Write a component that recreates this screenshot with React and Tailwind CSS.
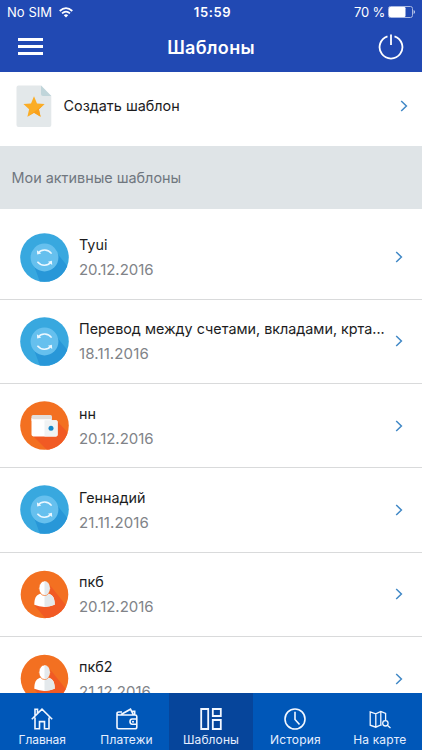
import React from "react";

function Chevron() {
  return (
    <svg className="h-3 w-2 shrink-0" viewBox="0 0 8 12" fill="none" stroke="#4088c6" strokeWidth="1.5">
      <path d="M1.2 1 6.4 6 1.2 11" />
    </svg>
  );
}

function TransferIcon() {
  return (
    <svg className="size-[49px] shrink-0" viewBox="0 0 49 49">
      <defs>
        <clipPath id="transfer">
          <circle cx="24.5" cy="24.5" r="24.3" />
        </clipPath>
      </defs>
      <g clipPath="url(#transfer)">
        <rect width="49" height="49" fill="#38a8df" />
        <path d="M13 30 20 49H49V35L36 19Z" fill="#2897d8" />
      </g>
      <circle cx="24.5" cy="24.5" r="13.9" fill="#66c0ee" />
      <g fill="none" stroke="#edf8ff" strokeWidth="1.5">
        <path d="M18.3 20C21.5 15.9 28 16 31.6 20.6M30.8 29.3C27.5 33.3 21 33.2 17.4 28.8" />
      </g>
      <path d="M16.9 17.3 17.2 21.6 21.2 20.6ZM32.2 32 31.9 27.7 27.9 28.7Z" fill="#edf8ff" />
    </svg>
  );
}

function WalletIcon() {
  return (
    <svg className="size-[49px] shrink-0" viewBox="0 0 49 49">
      <defs>
        <clipPath id="wallet">
          <circle cx="24.5" cy="24.5" r="24.3" />
        </clipPath>
      </defs>
      <g clipPath="url(#wallet)">
        <rect width="49" height="49" fill="#f37021" />
        <path d="M12 34 27 49H49V33L37 20Z" fill="#f15a24" />
      </g>
      <path d="M11.5 17V15.5a1.5 1.5 0 0 1 1.5-1.5H30.5a1.5 1.5 0 0 1 1.5 1.5V20H11.5Z" fill="#e2dedb" />
      <path d="M11.5 16.5q.4 1.7 2.2 1.7H31v1H36a1.6 1.6 0 0 1 1.6 1.6V33.8a1.6 1.6 0 0 1-1.6 1.6H13.3a1.8 1.8 0 0 1-1.8-1.8Z" fill="#fff" />
      <path d="M24.5 19.2H36a1.6 1.6 0 0 1 1.6 1.6V33.8a1.6 1.6 0 0 1-1.6 1.6H24.5Z" fill="#f0f2f3" />
      <circle cx="31" cy="27.3" r="2.5" fill="#1688c8" />
    </svg>
  );
}

function PersonIcon() {
  return (
    <svg className="size-[49px] shrink-0" viewBox="0 0 49 49">
      <defs>
        <clipPath id="person">
          <circle cx="24.5" cy="24.5" r="23.8" />
        </clipPath>
      </defs>
      <g clipPath="url(#person)">
        <rect width="49" height="49" fill="#f37021" />
        <path d="M15 36 26 49H49V39L29 14Z" fill="#f15a24" />
      </g>
      <path d="M14.3 34.8C14.3 28.5 15.8 25.6 20 23.8H29C33.2 25.6 34.7 28.5 34.7 34.8Q30 36.9 24.5 36.9T14.3 34.8Z" fill="#fff" />
      <path d="M24.5 23.8H29C33.2 25.6 34.7 28.5 34.7 34.8Q30 36.9 24.5 36.9Z" fill="#e4e9ec" />
      <ellipse cx="24.5" cy="18.2" rx="5.6" ry="7.3" fill="#fff" stroke="#f37021" strokeWidth=".8" />
      <path d="M24.5 11.3a5.2 6.9 0 0 1 0 13.8Z" fill="#e4e9ec" />
    </svg>
  );
}

const icons = { transfer: TransferIcon, wallet: WalletIcon, person: PersonIcon };

const templates = [
  { icon: "transfer", name: "Tyui", date: "20.12.2016", dateTracking: "tracking-[-0.03px]" },
  { icon: "transfer", name: "Перевод между счетами, вкладами, крта...", date: "18.11.2016", dateTracking: "tracking-[0.12px]" },
  { icon: "wallet", name: "нн", date: "20.12.2016", dateTracking: "tracking-[-0.03px]" },
  { icon: "transfer", name: "Геннадий", date: "21.11.2016", dateTracking: "tracking-[0.12px]" },
  { icon: "person", name: "пкб", date: "20.12.2016", dateTracking: "tracking-[-0.03px]" },
  { icon: "person", name: "пкб2", date: "21.12.2016", dateTracking: "tracking-[0px]" },
];

function TemplateRow({ item }) {
  const Icon = icons[item.icon];
  return (
    <li className="flex h-[84.3px] shrink-0 items-center border-b border-[#d9dadb] pr-[19px] pl-5">
      <Icon />
      <div className="ml-[10px] min-w-0 flex-1 whitespace-nowrap">
        <div className="text-[14.35px] leading-[25px] text-[#1c1c1e]">{item.name}</div>
        <div className={`text-[15px] leading-[25px] text-[#808388] ${item.dateTracking}`}>{item.date}</div>
      </div>
      <Chevron />
    </li>
  );
}

function Glyph({ children }) {
  return (
    <svg className="h-[22px] w-[22px]" viewBox="0 0 22 22" fill="none" stroke="#f2f7ff" strokeWidth="1.6">
      {children}
    </svg>
  );
}

const tabs = [
  {
    label: "Главная",
    tracking: "tracking-[-0.1px]",
    glyph: <path d="M.8 11.2 11 1.2 21.2 11.2M4 8V1.2H6.5V5.3M4 9.5V20.8H8.5V13.6H13.5V20.8H18V9.5" />,
  },
  {
    label: "Платежи",
    tracking: "tracking-[0.15px]",
    glyph: (
      <>
        <path d="M1 5.2V19.2Q1 20.8 2.6 20.8H19Q20.8 20.8 20.8 19.2V8.4Q20.8 7 19.2 7H2.8Q1 7 1 5.4 1 4 3 4H6M5 6.5 14.5 1.2 17.4 6.8M15.5 3.4H18.7V7M20.8 11H16.2Q14 11 14 13.6T16.2 16.3H20.8" />
        <circle cx="17" cy="13.7" r="1" fill="#f2f7ff" stroke="none" />
      </>
    ),
  },
  {
    label: "Шаблоны",
    tracking: "tracking-[0.1px]",
    active: true,
    glyph: <path strokeWidth="1.8" d="M1.2 1H8.2V21H1.2ZM12.8 1H20.8V8H12.8ZM12.8 12H20.8V21H12.8Z" />,
  },
  {
    label: "История",
    tracking: "tracking-[0.15px]",
    glyph: (
      <>
        <circle cx="11" cy="11" r="10" />
        <path d="M11 3.8V11.5L15.5 16.5" />
      </>
    ),
  },
  {
    label: "На карте",
    tracking: "tracking-[0.15px]",
    glyph: (
      <g strokeWidth="1.3">
        <path d="M12.5 17.4 11.8 17 6.8 19.2 1.2 17.2V4L6.8 5.8 11.8 3.5 16.6 5.5V12M6.8 5.8V19.2M11.8 3.5V17" />
        <circle cx="16.4" cy="15.3" r="2.7" />
        <path d="M18.3 17.2 21.5 20" />
      </g>
    ),
  },
];

export default function App() {
  return (
    <div className="flex h-[750px] w-[422px] flex-col overflow-hidden bg-white font-['Inter','Noto_Sans',sans-serif]">
      <header className="h-[72px] shrink-0 bg-[#2149b3] text-white">
        <div className="grid h-6 grid-cols-3 items-center pr-[7px] pl-[7px] text-[13px] leading-6">
          <div className="flex items-center gap-[7px]">
            <span className="tracking-[0.05px]">No SIM</span>
            <svg className="h-[11px] w-[14px]" viewBox="0 0 14 11" fill="none" stroke="white" strokeWidth="1.7">
              <path d="M.7 4Q7-1.8 13.3 4M3 6.4Q7 2.8 11 6.4" />
              <path d="M4.8 8.2Q7 6.2 9.2 8.2L7 10.6Z" fill="white" stroke="none" />
            </svg>
          </div>
          <span className="pl-[3px] text-center font-semibold tracking-[0.6px]">15:59</span>
          <div className="flex items-center justify-end gap-[3px]">
            <span className="text-[13px] tracking-[-0.2px] whitespace-nowrap">70 %</span>
            <svg className="h-[12px] w-[27px]" viewBox="0 0 27 12">
              <rect x=".5" y=".5" width="24" height="11" rx="2" fill="none" stroke="#a8b8e2" />
              <rect x="1" y="1" width="16.5" height="10" rx="1.2" fill="white" />
              <path d="M25.6 4v4q1.4-.6 1.4-2t-1.4-2Z" fill="#cbd5ef" />
            </svg>
          </div>
        </div>
        <div className="grid h-[45px] grid-cols-[60px_1fr_60px] items-center">
          <div className="ml-[18px] flex w-[25px] flex-col gap-1">
            <i className="h-[3px] bg-white" />
            <i className="h-[3px] bg-white" />
            <i className="h-[3px] bg-white" />
          </div>
          <h1 className="pt-px text-center text-[18px] font-semibold tracking-[0.3px]">Шаблоны</h1>
          <svg className="ml-4 h-[26px] w-[26px]" viewBox="0 0 26 26" fill="none" stroke="white" strokeWidth="1.8">
            <path d="M9.5 2.3A11.4 11.4 0 1 0 16.5 2.3M13 .5V11" />
          </svg>
        </div>
      </header>

      <div className="flex h-[74px] shrink-0 items-center pr-[14px] pb-[6px] pl-4">
        <svg className="h-[43px] w-9" viewBox="0 0 36 43">
          <path d="M2.5.5H25L35.3 11V40a2 2 0 0 1-2 2H2.5a2 2 0 0 1-2-2V2.5a2 2 0 0 1 2-2Z" fill="#e3e8ea" />
          <path d="M25 .5 35.3 11H27a2 2 0 0 1-2-2Z" fill="#c0d5da" />
          <path d="m18 11.3 3 7.1 7.6.7-5.7 5.1 1.7 7.6-6.6-4-6.6 4 1.7-7.6-5.7-5.1 7.6-.7Z" fill="#fbad26" />
          <path d="m28.6 19.1-5.7 5.1 1.7 7.6-6.6-4-6.6 4Z" fill="#f9a01b" />
        </svg>
        <span className="ml-[11.5px] flex-1 text-[14.4px] text-[#1c1c1e]">Создать шаблон</span>
        <Chevron />
      </div>

      <h2 className="flex h-[63px] shrink-0 items-center bg-[#dfe4e7] pl-[11.5px] text-[14.4px] text-[#70777f]">Мои активные шаблоны</h2>

      <ul className="flex min-h-0 flex-1 flex-col overflow-hidden pt-[6.4px]">
        {templates.map((item) => (
          <TemplateRow key={item.name} item={item} />
        ))}
      </ul>

      <nav className="grid h-[57px] shrink-0 grid-cols-5 bg-[#0057b8]">
        {tabs.map((tab) => (
          <div
            key={tab.label}
            className={`flex flex-col items-center pt-[15px] text-[12px] leading-[16px] text-[#e6efff] ${tab.active ? "bg-[#06459b]" : ""}`}
          >
            <Glyph>{tab.glyph}</Glyph>
            <span className={`mt-[2px] whitespace-nowrap ${tab.tracking}`}>{tab.label}</span>
          </div>
        ))}
      </nav>
    </div>
  );
}
